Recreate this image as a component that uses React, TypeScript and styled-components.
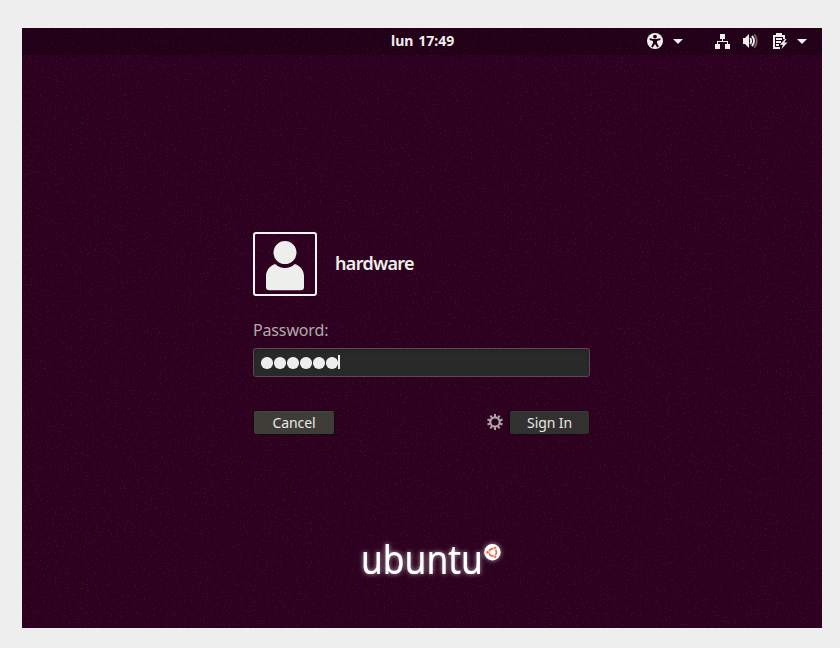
import React from "react";
import styled, { createGlobalStyle } from "styled-components";

const GlobalStyle = createGlobalStyle`
  * { box-sizing: border-box; }
  html, body { margin: 0; padding: 0; background: #eeeeee; overflow: hidden; }
  button, input { font: inherit; }
`;

const Page = styled.main`
  width: 840px;
  height: 648px;
  padding: 28px 18px 20px 22px;
  background: #eeeeee;
  font-family: "Noto Sans", "Open Sans", sans-serif;
`;

const Screen = styled.div`
  position: relative;
  isolation: isolate;
  display: flex;
  flex-direction: column;
  width: 800px;
  height: 600px;
  overflow: hidden;
  background: #2c001e;
  color: #eeeeec;
`;

const Grain = styled.svg`
  position: absolute;
  inset: 0;
  z-index: -1;
  pointer-events: none;
`;

const TopBar = styled.header`
  display: grid;
  grid-template-columns: 1fr auto 1fr;
  height: 27px;
  background: #00000038;
`;

const Clock = styled.time`
  grid-column: 2;
  width: 64px;
  padding-left: 1px;
  text-align: center;
  white-space: nowrap;
  font-size: 14px;
  font-weight: 700;
  line-height: 26px;
  letter-spacing: 0.05px;
  word-spacing: 1px;
`;

const Indicators = styled.div`
  display: flex;
  align-items: center;
  justify-content: flex-end;
  padding-right: 14px;
  height: 26px;
`;

const Indicator = styled.svg<{ $gap?: number }>`
  display: block;
  flex: none;
  margin-right: ${({ $gap = 0 }) => $gap}px;
  fill: #eeeeec;
`;

const LoginForm = styled.form`
  display: flex;
  flex-direction: column;
  width: 337px;
  margin: 177px 0 0 231px;
`;

const User = styled.div`
  display: flex;
  align-items: center;
  gap: 18px;
  height: 64px;
`;

const Avatar = styled.div`
  width: 64px;
  height: 64px;
  border: 2px solid #f5f5f4;
  border-radius: 3px;
`;

const UserName = styled.span`
  font-size: 18px;
  font-weight: 600;
  line-height: 24px;
  letter-spacing: -0.65px;
  padding-bottom: 3px;
`;

const Label = styled.label`
  height: 24px;
  margin-top: 22px;
  color: #b4aaae;
  font-size: 16px;
  line-height: 24px;
  letter-spacing: -0.15px;
`;

const PasswordField = styled.div`
  display: flex;
  align-items: center;
  height: 29px;
  margin-top: 6px;
  padding: 1px 7px 0;
  border: 1px solid #5e4855;
  border-radius: 3px;
  background: #292929;
  box-shadow: inset 0 2px 3px #20202099;
`;

const Dot = styled.span`
  width: 11.5px;
  height: 11.5px;
  margin-right: 1.5px;
  border-radius: 50%;
  background: #eeeeec;
`;

const Caret = styled.span`
  width: 2px;
  height: 14px;
  margin: 0 0 2px -1px;
  background: #eeeeec;
`;

const Actions = styled.div`
  display: flex;
  align-items: center;
  justify-content: space-between;
  height: 25px;
  margin-top: 33px;
`;

const SessionActions = styled.div`
  display: flex;
  align-items: center;
  gap: 6px;
`;

const Button = styled.button<{ $width: number; $tone: string }>`
  width: ${({ $width }) => $width}px;
  height: 25px;
  padding: 1px 0 0;
  border: 1px solid #17090f;
  border-radius: 3px;
  background: ${({ $tone }) => $tone};
  box-shadow: inset 0 1px #ffffff0d;
  color: #e8e8e6;
  font-size: 14px;
  line-height: 20px;
  letter-spacing: -0.1px;
`;

const GearIcon = styled.svg`
  display: block;
  margin-bottom: 1px;
`;

const Brand = styled.svg`
  position: absolute;
  left: 328px;
  top: 504px;
`;

const iconText = (label: string) => ({ role: "img", "aria-label": label });

function AccessibilityIcon() {
  return (
    <Indicator $gap={9} width="16" height="16" {...iconText("Accessibility")}>
      <circle cx="8" cy="8" r="8" />
      <circle cx="8" cy="3.6" r="1.9" fill="#220016" />
      <path d="M2.6 5.2 6.5 6h3l3.9-.8v1.9L10 8v2l1.9 3.6-1.7.8L8 11l-2.2 3.4-1.7-.8L6 10V8l-3.4-.9Z" fill="#220016" />
    </Indicator>
  );
}

function DownArrow({ gap = 0 }: { gap?: number }) {
  return (
    <Indicator $gap={gap} width="12" height="16" {...iconText("Open menu")}>
      <path d="M1 6h10L6 11Z" />
    </Indicator>
  );
}

function NetworkIcon() {
  return (
    <Indicator $gap={11} width="16" height="16" {...iconText("Wired network")}>
      <path d="M5 1h5v5H8v2h5v3h2v5h-5v-5h2V9H3v2h2v5H0v-5h2V8h5V6H5Z" />
    </Indicator>
  );
}

function VolumeIcon() {
  return (
    <Indicator $gap={14} width="16" height="16" {...iconText("Volume")}>
      <path d="M1 5h2l4-4v14l-4-4H1Z" />
      <g fill="none" stroke="#eeeeec" strokeWidth="1.9">
        <path d="M8.1 5.2c1.4 1.4 1.4 4.2 0 5.6" />
        <path d="M9.9 3c2.8 2.6 2.8 7.4 0 10" />
        <path d="M12.2 1.4c3.4 3.6 3.4 9.6 0 13.2" opacity=".4" />
      </g>
    </Indicator>
  );
}

function BatteryIcon() {
  return (
    <Indicator $gap={8} width="16" height="16" {...iconText("Battery charging")}>
      <path d="M4 0h6v2h3v4h-2V4H3v10h5v2H1V2h3Z" />
      <path d="M4 5h6v2H4zM4 8h5v2H4zM4 11h3v2H4z" />
      <path d="m13 6-5.2 5.7h3.1L9.5 16l6-6.4h-3.2L14.5 6Z" />
    </Indicator>
  );
}

function Gear() {
  const teeth = Array.from({ length: 10 }, (_, i) => i * 36);
  return (
    <GearIcon width="16" height="16" role="img" aria-label="Session options">
      <circle cx="8" cy="8" r="4.7" fill="none" stroke="#aaa6a3" strokeWidth="2.2" />
      <g fill="#aaa6a3">
        {teeth.map((angle) => (
          <path key={angle} d="M7 .1h2v3H7z" transform={`rotate(${angle} 8 8)`} />
        ))}
      </g>
    </GearIcon>
  );
}

export default function App() {
  return (
    <>
      <GlobalStyle />
      <Page>
        <Screen>
          <Grain width="800" height="600" aria-hidden="true">
            <filter id="grain" x="0" y="0" width="100%" height="100%">
              <feTurbulence type="fractalNoise" baseFrequency=".55" numOctaves="2" seed="4" />
              <feColorMatrix values="0 0 0 0 1  0 0 0 0 .7  0 0 0 0 .85  1.4 0 0 0 -.76" />
            </filter>
            <rect width="800" height="600" filter="url(#grain)" opacity=".17" />
          </Grain>

          <TopBar>
            <Clock>lun 17:49</Clock>
            <Indicators>
              <AccessibilityIcon />
              <DownArrow gap={31} />
              <NetworkIcon />
              <VolumeIcon />
              <BatteryIcon />
              <DownArrow />
            </Indicators>
          </TopBar>

          <LoginForm>
            <User>
              <Avatar>
                <svg width="60" height="60" viewBox="255 234 60 60" aria-hidden="true">
                  <g fill="#eeeeec">
                    <circle cx="285" cy="252.6" r="11.5" />
                    <path d="M275.3 264c4.8 5.2 14.6 5.2 19.4 0 6 2 9.3 6.6 9.3 12.5V287c0 2.3-1 3.3-3.3 3.3h-31.4c-2.3 0-3.3-1-3.3-3.3v-10.5c0-5.9 3.3-10.5 9.3-12.5Z" />
                  </g>
                </svg>
              </Avatar>
              <UserName>hardware</UserName>
            </User>
            <Label>Password:</Label>
            <PasswordField role="textbox" aria-label="Password">
              {Array.from({ length: 6 }, (_, i) => <Dot key={i} />)}
              <Caret />
            </PasswordField>
            <Actions>
              <Button type="button" $width={82} $tone="#3e3d38">Cancel</Button>
              <SessionActions>
                <Gear />
                <Button type="button" $width={81} $tone="#32312f">Sign In</Button>
              </SessionActions>
            </Actions>
          </LoginForm>

          <Brand width="165" height="56" viewBox="350 532 165 56" role="img" aria-label="Ubuntu">
            <defs>
              <filter id="brandGlow" x="-20%" y="-40%" width="140%" height="180%">
                <feGaussianBlur stdDeviation="2.6" result="blur" />
                <feComponentTransfer in="blur" result="glow">
                  <feFuncA type="linear" slope=".65" />
                </feComponentTransfer>
                <feMerge><feMergeNode in="glow" /><feMergeNode in="SourceGraphic" /></feMerge>
              </filter>
            </defs>
            <g filter="url(#brandGlow)" fill="#fff">
              <text x="361" y="573.5" fontFamily="Noto Sans, sans-serif" fontSize="40.5" fontWeight="400" stroke="#fff" strokeWidth=".2" textLength="122" lengthAdjust="spacingAndGlyphs">ubuntu</text>
              <circle cx="492.4" cy="552.3" r="8.2" />
            </g>
            <g fill="none" stroke="#e5704d">
              <circle cx="492.8" cy="552.3" r="3.7" strokeWidth="1.8" strokeDasharray="6.6 1.15" strokeDashoffset="3.3" />
            </g>
            <g fill="#e5704d" stroke="#fff" strokeWidth=".6">
              <circle cx="487.6" cy="552.3" r="1.6" />
              <circle cx="495.1" cy="547.8" r="1.6" />
              <circle cx="495.1" cy="556.8" r="1.6" />
            </g>
          </Brand>
        </Screen>
      </Page>
    </>
  );
}
